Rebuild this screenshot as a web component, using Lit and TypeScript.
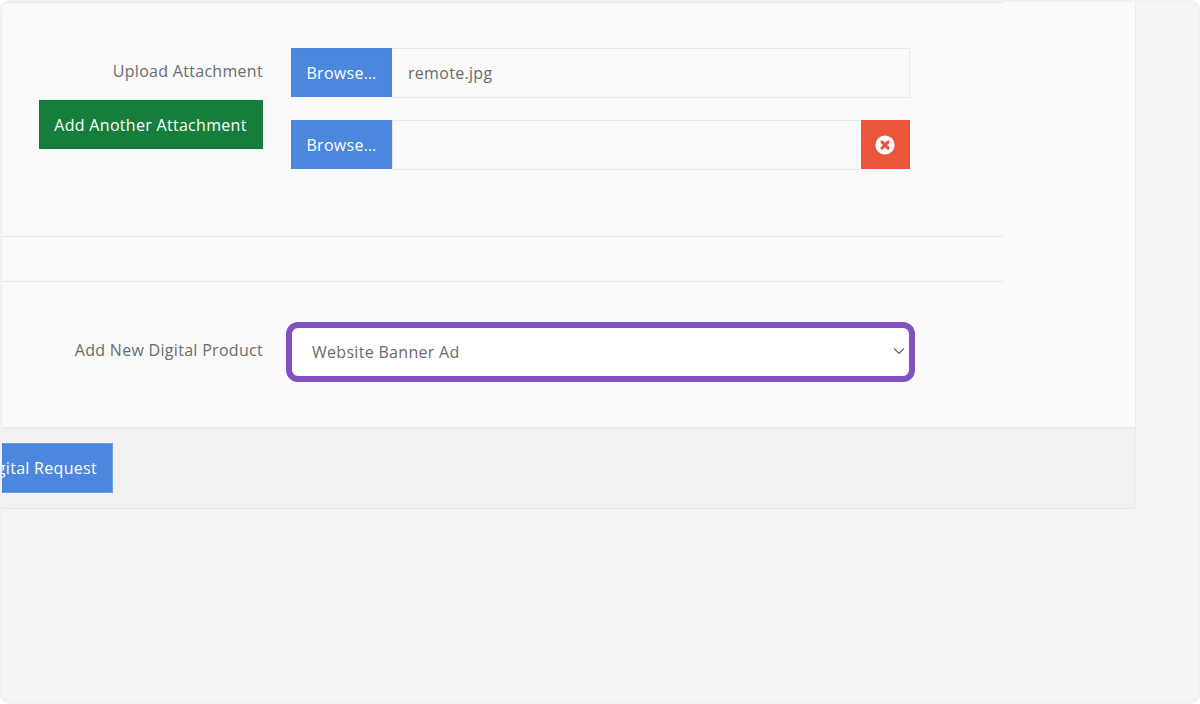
import { LitElement, html, css } from "lit";
import { customElement } from "lit/decorators.js";

@customElement("app-root")
export class AppRoot extends LitElement {
  static styles = css`
    :host { display: block; width: 1200px; height: 704px; font-family: "Open Sans", "Noto Sans", sans-serif; font-size: 16px; letter-spacing: .3px; color: #6a6a6a; }
    * { box-sizing: border-box; }
    .frame { width: 1200px; height: 704px; background: #f5f5f6; border: 2px solid #f0f0f5; border-radius: 10px; overflow: hidden; }
    .card { width: 1134px; height: 507px; display: flex; flex-direction: column; border-right: 1px solid #ebebeb; border-bottom: 1px solid #e6e6e6; border-radius: 0 0 3px 0; }
    .body { flex: 1; background: #fafafa; display: flex; flex-direction: column; }
    .form { width: 1001px; border-top: 1px solid #e8e8ec; }
    .upload { height: 234px; border-bottom: 1px solid #e6e6e6; padding-top: 45px; display: grid; grid-template-columns: 261px 619px; column-gap: 28px; }
    .left { display: flex; flex-direction: column; align-items: flex-end; }
    .label { line-height: 22px; text-align: right; }
    .left .label { margin-top: 12px; }
    .add { margin-top: 18px; width: 224px; height: 49px; display: flex; align-items: center; justify-content: center; padding-right: 2px; background: #167e3c; color: #fff; border: 1px solid #0f7a33; border-right: 0; }
    .files { display: flex; flex-direction: column; gap: 22px; }
    .group { display: flex; height: 50px; }
    .browse { width: 101px; height: 49px; display: flex; align-items: center; justify-content: center; background: #4a87dd; color: #fff; border: 1px solid #3f86e6; }
    .browse.plain { border-color: #4a87dd; }
    .input { flex: 1; height: 50px; background: #fafafa; border: 1px solid #e8e8e8; border-left-width: 0; padding-left: 16px; display: flex; align-items: center; }
    .input.noname { border-left-width: 1px; border-right-width: 0; }
    .remove { width: 49px; height: 49px; background: #ea563b; display: flex; align-items: center; justify-content: center; padding-right: 1px; }
    .remove svg { display: block; }
    .gap { height: 45px; border-bottom: 1px solid #e6e6e6; }
    .product { display: grid; grid-template-columns: 261px 629px; column-gap: 23px; padding-top: 40px; }
    .product .label { padding-top: 17px; }
    .select { height: 60px; background: #fff; border: 6px solid #8250c0; border-radius: 12px; display: flex; align-items: center; justify-content: space-between; padding: 0 4px 0 20px; }
    .select svg { display: block; margin-top: -3px; }
    .footer { height: 81px; border-top: 2px solid #ebebeb; background: #f2f2f2; padding-top: 14px; overflow: hidden; }
    .submit { width: 220px; margin-left: -109px; height: 50px; display: flex; align-items: center; justify-content: flex-end; padding-right: 15px; background: #4a87dd; color: #fff; border: 1px solid #6fa0e6; white-space: nowrap; }
  `;

  render() {
    return html`
      <div class="frame">
        <div class="card">
          <div class="body">
            <div class="form">
              <div class="upload">
                <div class="left">
                  <div class="label">Upload Attachment</div>
                  <div class="add">Add Another Attachment</div>
                </div>
                <div class="files">
                  <div class="group">
                    <div class="browse">Browse…</div>
                    <div class="input">remote.jpg</div>
                  </div>
                  <div class="group">
                    <div class="browse plain">Browse…</div>
                    <div class="input noname"></div>
                    <div class="remove">
                      <svg width="20" height="20" viewBox="0 0 20 20">
                        <circle cx="10" cy="10" r="9.6" fill="#fff"></circle>
                        <path d="M6.9 6.9l6.2 6.2M13.1 6.9l-6.2 6.2" stroke="#ea563b" stroke-width="3" stroke-linecap="round"></path>
                      </svg>
                    </div>
                  </div>
                </div>
              </div>
              <div class="gap"></div>
              <div class="product">
                <div class="label">Add New Digital Product</div>
                <div class="select">
                  <span>Website Banner Ad</span>
                  <svg width="12" height="8" viewBox="0 0 12 8" fill="none">
                    <path d="M1 1.5l5 5 5-5" stroke="#666" stroke-width="1.2"></path>
                  </svg>
                </div>
              </div>
            </div>
          </div>
          <div class="footer">
            <div class="submit">Submit Digital Request</div>
          </div>
        </div>
      </div>
    `;
  }
}
